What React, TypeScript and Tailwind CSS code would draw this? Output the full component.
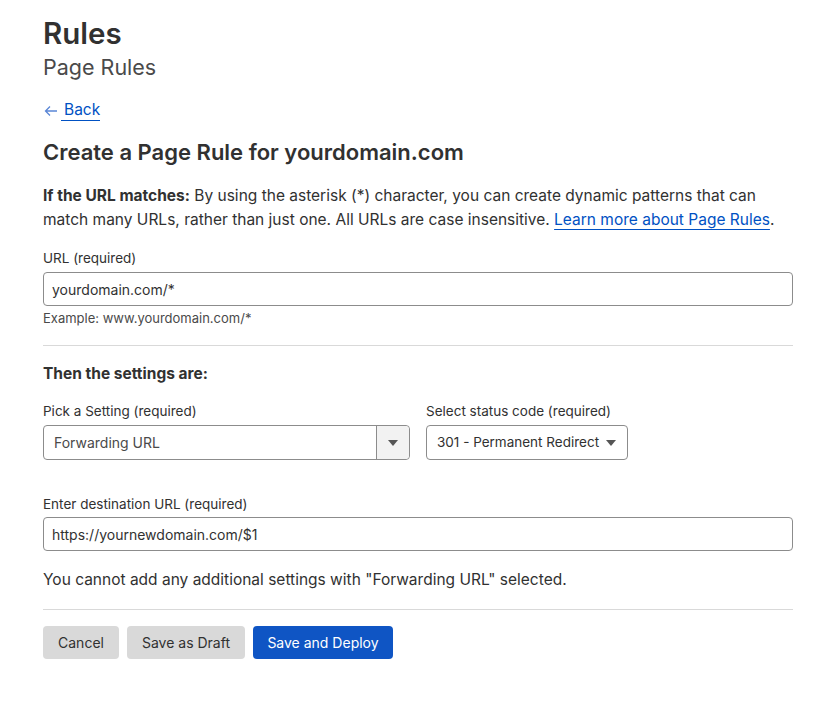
import React from "react";

export default function App() {
  return (
    <div className="min-h-[701px] bg-white text-[#313131]" style={{ fontFamily: "Inter, 'Noto Sans', sans-serif" }}>
      <div className="w-[750px] ml-[43px] pt-[14px]">
        <h1 className="text-[29.5px] leading-[38px] font-semibold text-[#313131]">Rules</h1>
        <h2 className="text-[21.5px] leading-[28px] text-[#4a4a4a] mt-[1px]">Page Rules</h2>
        <div className="mt-[19px] flex items-center text-[15.5px] leading-[24px]">
          <svg width="14" height="12" viewBox="0 0 14 12" className="mr-[3px] ml-[1px]">
            <path d="M13 6H1.5M6 1.5L1.5 6 6 10.5" fill="none" stroke="#5a86d6" strokeWidth="1.3" />
          </svg>
          <a className="text-[#0051c3] border-b border-[#0051c3] leading-[20px] pl-[3px]">Back</a>
        </div>
        <h3 className="mt-[17px] text-[22px] leading-[28px] font-semibold text-[#313131]">Create a Page Rule for yourdomain.com</h3>
        <p className="mt-[18px] text-[15.5px] leading-[24px] text-[#313131]">
          <span className="font-bold">If the URL matches:</span> By using the asterisk (*) character, you can create dynamic patterns that can match many URLs, rather than just one. All URLs are case insensitive.{" "}
          <a className="text-[#0051c3] underline underline-offset-[4px] decoration-[1px]">Learn more about Page Rules</a>.
        </p>
        <div className="mt-[16px] text-[13.5px] leading-[20px]">URL (required)</div>
        <div className="mt-[4px] h-[34px] border border-[#8c8c8c] rounded-[4px] flex items-center px-[8px] text-[14px]">yourdomain.com/*</div>
        <div className="mt-[3px] text-[13px] leading-[18px] text-[#4a4a4a]">Example: www.yourdomain.com/*</div>
        <div className="mt-[18px] border-t border-[#d9d9d9]" />
        <div className="mt-[16px] text-[15.5px] leading-[24px] font-bold">Then the settings are:</div>
        <div className="mt-[15px] flex gap-[16px]">
          <div className="w-[367px]">
            <div className="text-[13.5px] leading-[20px]">Pick a Setting (required)</div>
            <div className="mt-[4px] h-[35px] border border-[#8c8c8c] rounded-[4px] flex items-stretch text-[14px]">
              <div className="flex-1 flex items-center px-[10px] text-[#4a4a4a]">Forwarding URL</div>
              <div className="w-[33px] border-l border-[#8c8c8c] bg-[#f2f2f2] rounded-r-[4px] flex items-center justify-center">
                <svg width="10" height="6" viewBox="0 0 10 6"><path d="M0 0h10L5 6z" fill="#555" /></svg>
              </div>
            </div>
          </div>
          <div>
            <div className="text-[13.5px] leading-[20px]">Select status code (required)</div>
            <div className="mt-[4px] h-[35px] w-[202px] border border-[#8c8c8c] rounded-[4px] flex items-center pl-[10px] pr-[11px] justify-between text-[13.5px]">
              <span>301 - Permanent Redirect</span>
              <svg width="10" height="6" viewBox="0 0 10 6"><path d="M0 0h10L5 6z" fill="#555" /></svg>
            </div>
          </div>
        </div>
        <div className="mt-[34px] text-[13.5px] leading-[20px]">Enter destination URL (required)</div>
        <div className="mt-[3px] h-[34px] border border-[#8c8c8c] rounded-[4px] flex items-center px-[8px] text-[14px]">https://yournewdomain.com/$1</div>
        <div className="mt-[17px] text-[15.5px] leading-[24px]">You cannot add any additional settings with "Forwarding URL" selected.</div>
        <div className="mt-[17px] border-t border-[#d9d9d9]" />
        <div className="mt-[16px] flex gap-[8px] text-[14px]">
          <button className="h-[33px] w-[76px] rounded-[4px] bg-[#d9d9d9] text-[#313131]">Cancel</button>
          <button className="h-[33px] w-[118px] rounded-[4px] bg-[#d9d9d9] text-[#313131]">Save as Draft</button>
          <button className="h-[33px] w-[140px] rounded-[4px] bg-[#0f55c4] text-white">Save and Deploy</button>
        </div>
      </div>
    </div>
  );
}
